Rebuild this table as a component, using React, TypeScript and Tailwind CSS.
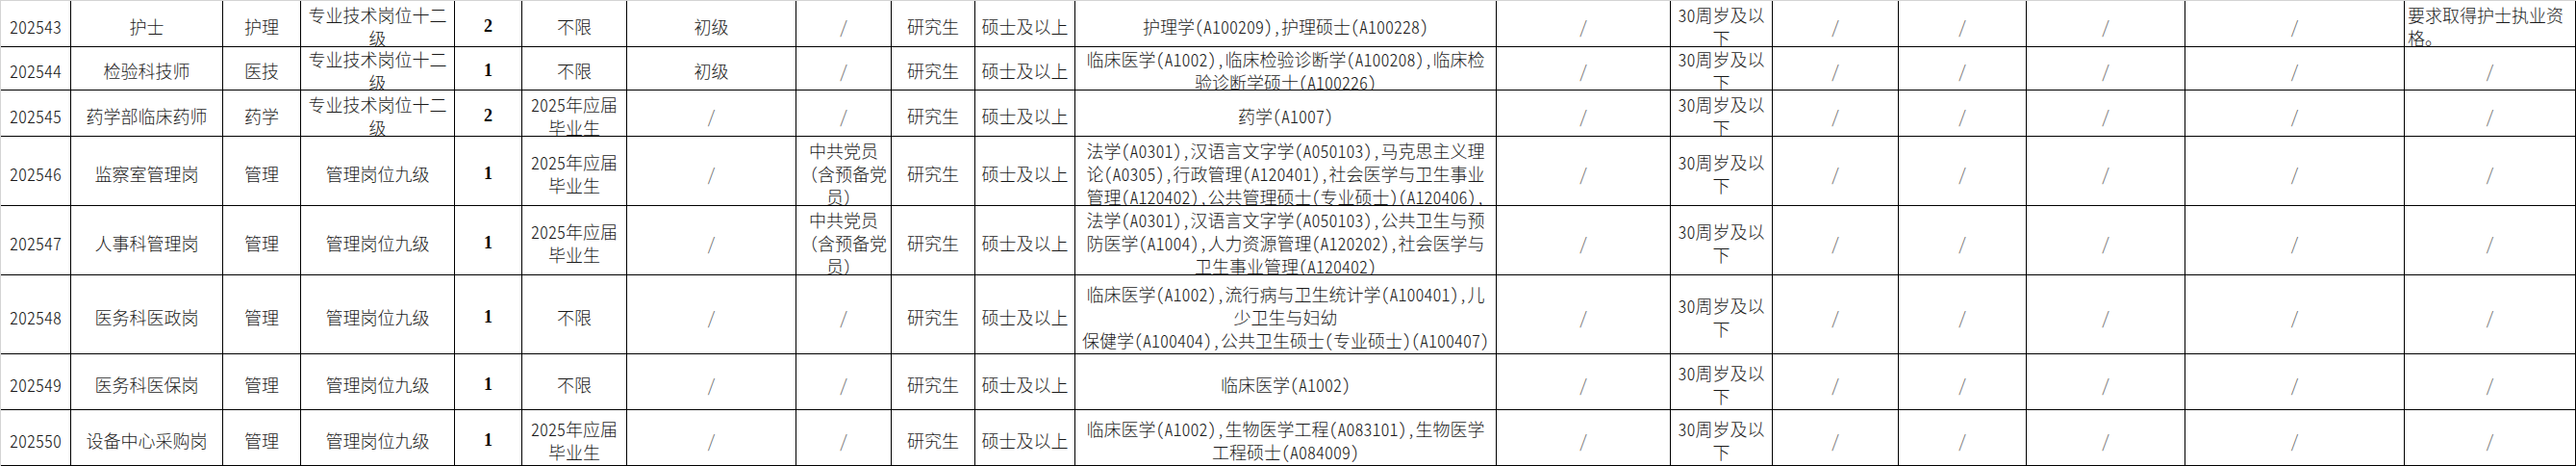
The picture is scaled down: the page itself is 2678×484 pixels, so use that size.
import clsx from "clsx";

// one row = 18 cells, "\n" marks a line break as it shows in the sheet
const rows: string[][] = [
  ["202543", "护士", "护理", "专业技术岗位十二\n级", "2", "不限", "初级", "/", "研究生", "硕士及以上", "护理学(A100209),护理硕士(A100228)", "/", "30周岁及以\n下", "/", "/", "/", "/", "要求取得护士执业资\n格。"],
  ["202544", "检验科技师", "医技", "专业技术岗位十二\n级", "1", "不限", "初级", "/", "研究生", "硕士及以上", "临床医学(A1002),临床检验诊断学(A100208),临床检\n验诊断学硕士(A100226)", "/", "30周岁及以\n下", "/", "/", "/", "/", "/"],
  ["202545", "药学部临床药师", "药学", "专业技术岗位十二\n级", "2", "2025年应届\n毕业生", "/", "/", "研究生", "硕士及以上", "药学(A1007)", "/", "30周岁及以\n下", "/", "/", "/", "/", "/"],
  ["202546", "监察室管理岗", "管理", "管理岗位九级", "1", "2025年应届\n毕业生", "/", "中共党员\n（含预备党\n员）", "研究生", "硕士及以上", "法学(A0301),汉语言文字学(A050103),马克思主义理\n论(A0305),行政管理(A120401),社会医学与卫生事业\n管理(A120402),公共管理硕士(专业硕士)(A120406),", "/", "30周岁及以\n下", "/", "/", "/", "/", "/"],
  ["202547", "人事科管理岗", "管理", "管理岗位九级", "1", "2025年应届\n毕业生", "/", "中共党员\n（含预备党\n员）", "研究生", "硕士及以上", "法学(A0301),汉语言文字学(A050103),公共卫生与预\n防医学(A1004),人力资源管理(A120202),社会医学与\n卫生事业管理(A120402)", "/", "30周岁及以\n下", "/", "/", "/", "/", "/"],
  ["202548", "医务科医政岗", "管理", "管理岗位九级", "1", "不限", "/", "/", "研究生", "硕士及以上", "临床医学(A1002),流行病与卫生统计学(A100401),儿\n少卫生与妇幼\n保健学(A100404),公共卫生硕士(专业硕士)(A100407)", "/", "30周岁及以\n下", "/", "/", "/", "/", "/"],
  ["202549", "医务科医保岗", "管理", "管理岗位九级", "1", "不限", "/", "/", "研究生", "硕士及以上", "临床医学(A1002)", "/", "30周岁及以\n下", "/", "/", "/", "/", "/"],
  ["202550", "设备中心采购岗", "管理", "管理岗位九级", "1", "2025年应届\n毕业生", "/", "/", "研究生", "硕士及以上", "临床医学(A1002),生物医学工程(A083101),生物医学\n工程硕士(A084009)", "/", "30周岁及以\n下", "/", "/", "/", "/", "/"],
];

// ascii runs get half-width glyphs, like SimSun in the sheet
function Txt({ s }: { s: string }) {
  const parts = s.split(/([\x20-\x7e]+)/);
  return (
    <>
      {parts.map((p, i) =>
        /^[\x20-\x7e]+$/.test(p) ? (
          <span key={i} className={clsx("[font-feature-settings:'hwid']", p === "/" && "text-[#666]")}>
            {p}
          </span>
        ) : (
          p
        )
      )}
    </>
  );
}

function Cell({ text, col, row }: { text: string; col: number; row: number }) {
  const left = col === 17 && row === 0;
  const bold = col === 4;
  return (
    <div
      className={clsx(
        "flex flex-col justify-center overflow-hidden border-r border-b border-black pt-[4px] leading-[24px] whitespace-pre",
        left ? "items-start pl-[3px] text-left" : "items-center text-center"
      )}
    >
      {bold ? (
        <span className="font-['Liberation_Serif',serif] font-bold text-black">{text}</span>
      ) : (
        <span>
          <Txt s={text} />
        </span>
      )}
    </div>
  );
}

export default function App() {
  return (
    <div className="w-[2678px] h-[484px] overflow-hidden bg-white">
      <div className="grid grid-cols-[73px_158px_81px_160px_70px_109px_176px_99px_87px_104px_438px_181px_106px_131px_133px_165px_228px_178px] grid-rows-[48px_45px_48px_72px_72px_82px_58px_58px] border-t border-l border-[#d4d4d4] font-['Noto_Sans_CJK_SC',sans-serif] font-light text-[18px] text-[#1a1a1a]">
        {rows.map((r, ri) => r.map((c, ci) => <Cell key={`${ri}-${ci}`} text={c} col={ci} row={ri} />))}
      </div>
    </div>
  );
}
